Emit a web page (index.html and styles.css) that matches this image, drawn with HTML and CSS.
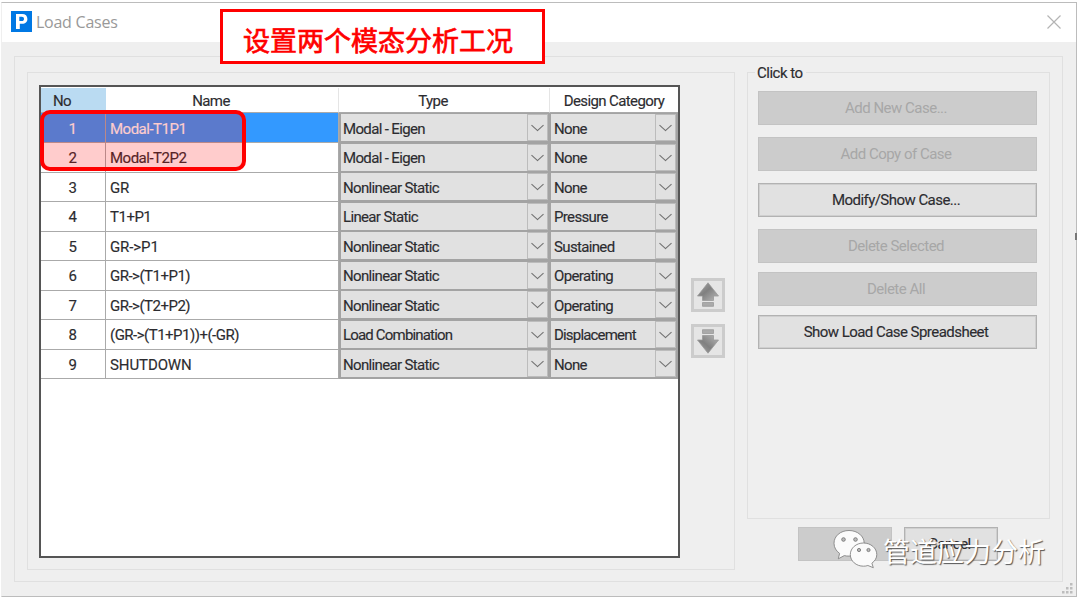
FILE: index.html
```html
<!DOCTYPE html>
<html lang="en">
<head>
<meta charset="utf-8">
<title>Load Cases</title>
<link rel="stylesheet" href="styles.css">
</head>
<body>
<div class="window">
  <header class="titlebar">
    <svg class="logo" viewBox="0 0 21 21"><rect width="21" height="21" fill="#0078e4"/><path fill="#fff" fill-rule="evenodd" d="M5 3h6.2c3.300 0 5.200 2 5.200 4.900s-2 4.900-5.200 4.900H8.800V18H5zM8.300 5.800v4.300h2.500c1.400 0 2.200-.8 2.200-2.100s-.8-2.200-2.200-2.200z"/></svg>
    <span class="title">Load Cases</span>
    <svg class="close" viewBox="0 0 14 14"><path d="M.5.5l13 13M13.500.5l-13 13" stroke="#b4b4b4" stroke-width="1.200"/></svg>
  </header>
  <main class="outer">
    <section class="cases">
      <div class="grid">
        <div class="row head"><span class="no">No</span><span class="name">Name</span><span class="type">Type</span><span class="cat">Design Category</span></div>
        <div class="row selected"><span class="no">1</span><span class="name">Modal-T1P1</span><span class="combo type">Modal - Eigen<i></i></span><span class="combo cat">None<i></i></span></div>
        <div class="row"><span class="no">2</span><span class="name">Modal-T2P2</span><span class="combo type">Modal - Eigen<i></i></span><span class="combo cat">None<i></i></span></div>
        <div class="row"><span class="no">3</span><span class="name wide">GR</span><span class="combo type">Nonlinear Static<i></i></span><span class="combo cat">None<i></i></span></div>
        <div class="row"><span class="no">4</span><span class="name">T1+P1</span><span class="combo type">Linear Static<i></i></span><span class="combo cat">Pressure<i></i></span></div>
        <div class="row"><span class="no">5</span><span class="name wide">GR-&gt;P1</span><span class="combo type">Nonlinear Static<i></i></span><span class="combo cat">Sustained<i></i></span></div>
        <div class="row"><span class="no">6</span><span class="name">GR-&gt;(T1+P1)</span><span class="combo type">Nonlinear Static<i></i></span><span class="combo cat">Operating<i></i></span></div>
        <div class="row"><span class="no">7</span><span class="name">GR-&gt;(T2+P2)</span><span class="combo type">Nonlinear Static<i></i></span><span class="combo cat">Operating<i></i></span></div>
        <div class="row"><span class="no">8</span><span class="name">(GR-&gt;(T1+P1))+(-GR)</span><span class="combo type load">Load Combination<i></i></span><span class="combo cat load">Displacement<i></i></span></div>
        <div class="row"><span class="no">9</span><span class="name wide">SHUTDOWN</span><span class="combo type">Nonlinear Static<i></i></span><span class="combo cat">None<i></i></span></div>
      </div>
      <div class="movers">
        <div class="mover"><svg viewBox="0 0 24 26"><defs><linearGradient id="g" x1="0" y1="0" x2="1" y2="1"><stop offset="0" stop-color="#a8a8a8"/><stop offset=".45" stop-color="#808080"/><stop offset="1" stop-color="#b8b8b8"/></linearGradient></defs><path d="M12 .8L22.500 14H17.500v4.500h-11V14H1.500z" fill="url(#g)" stroke="#999" stroke-width=".8"/><path d="M6.500 20.500h11v3.800h-11z" fill="#aaa" stroke="#999" stroke-width=".8"/></svg></div>
        <div class="mover down"><svg viewBox="0 0 24 26"><path d="M12 .8L22.500 14H17.500v4.500h-11V14H1.500z" fill="url(#g)" stroke="#999" stroke-width=".8"/><path d="M6.500 20.500h11v3.800h-11z" fill="#aaa" stroke="#999" stroke-width=".8"/></svg></div>
      </div>
    </section>
    <aside class="side">
      <section class="actions">
        <h2 class="legend">Click to</h2>
        <div class="btn off">Add New Case...</div>
        <div class="btn off">Add Copy of Case</div>
        <div class="btn">Modify/Show Case...</div>
        <div class="btn off tight">Delete Selected</div>
        <div class="btn off">Delete All</div>
        <div class="btn">Show Load Case Spreadsheet</div>
      </section>
      <div class="footer"><div class="btn off"></div><div class="btn cancel">Cancel</div></div>
    </aside>
  </main>
  <svg class="grip" viewBox="0 0 11 11" fill="#bdbdbd"><path d="M8 0h2.500v2.500H8zM4 4h2.500v2.500H4zM8 4h2.500v2.500H8zM0 8h2.500v2.500H0zM4 8h2.500v2.500H4zM8 8h2.500v2.500H8z"/></svg>
  <div class="edge-mark"></div>
</div>
<div class="highlight"></div>
<div class="callout">设置两个模态分析工况</div>
<div class="watermark">
  <svg class="wechat" viewBox="0 0 46 40"><g fill="#fbfbfb" stroke="#858585" stroke-width=".9"><path d="M17 1.500C8.500 1.500 2 7 2 14.300c0 4.200 2.200 7.700 5.600 10.100L6.300 29.800l6-3.200c1.500.4 3 .5 4.700.5 8.500 0 15.200-5.600 15.200-12.800S25.500 1.500 17 1.500z"/><path d="M31.500 14c-7.300 0-13.200 5.100-13.200 11.600S24.200 37.200 31.500 37.200c1.600 0 3-.2 4.400-.7l5.400 2.200-1.400-4.500c3-2.100 4.900-5.200 4.900-8.600C44.800 19.100 38.800 14 31.500 14z"/></g><g fill="#bbb" stroke="#777" stroke-width=".9"><circle cx="11.500" cy="10.500" r="1.800"/><circle cx="23.500" cy="10.500" r="1.800"/><circle cx="27" cy="21" r="1.600"/><circle cx="36.500" cy="21" r="1.600"/></g></svg>
  <span>管道应力分析</span>
</div>
</body>
</html>
```
FILE: styles.css
```css
* { box-sizing: border-box; }
body {
  margin: 0; width: 1080px; height: 600px; overflow: hidden; background: #fff;
  padding: 2px 0 0 1px; color: #2c2c30;
  font: 15px/18px Roboto, "Liberation Sans", sans-serif; letter-spacing: -.5px;
  -webkit-text-stroke: .15px;
}
.window { position: relative; width: 1076px; height: 595px; background: #efefef; border: 1px solid #bcbcbc; border-left-color: #efefef; }
.titlebar { height: 39px; background: #fff; display: flex; align-items: center; padding: 0 15px 2px 9px; }
.logo { width: 21px; height: 21px; }
.title { margin-left: 4px; flex: 1; font: 16px "Open Sans", sans-serif; letter-spacing: -.25px; color: #999; -webkit-text-stroke: 0; }
.close { width: 14px; height: 14px; }
.outer { margin: 14px 0 0 12px; width: 1049px; height: 526px; border: 1px solid #e0e0e0; padding: 15px 12px 11px; display: flex; gap: 12px; }
.cases { width: 708px; height: 498px; border: 1px solid #e0e0e0; padding: 12px 0 0 11px; display: flex; }
.grid { width: 641px; height: 473px; background: #fff; border: 2px solid #555; }
.row { display: grid; grid-template-columns: 65px 233px 211px 128px; height: 29.5px; }
.head { height: 26px; padding-top: 1px; letter-spacing: -.6px; }
.row > span { display: flex; align-items: center; border-right: 1px solid #aaa; border-bottom: 1px solid #aaa; padding-top: 2px; }
.row:not(.head) > .name { padding-left: 4px; }
.row > .no { justify-content: center; padding-right: 1px; }
.row.head > span { justify-content: center; border-right-color: #e5e5e5; padding-top: 2px; }
.row.head > .no { background: #badbf2; justify-content: flex-start; padding-left: 12px; border-right-color: #badbf2; }
.row.head > .name, .row.head > .type { padding-right: 22px; }
.row.head > .cat { letter-spacing: -.6px; border-right: 0; }
.row > .wide { letter-spacing: -.1px; }
.selected .no, .selected .name { background: #3399ff; color: #fff; }
.row > .combo { justify-content: space-between; background: #e1e1e1; border: 2px solid #a3a3a3; border-width: 1px 2px 2px 2px; padding: 2px 0 0 2px; letter-spacing: -.65px; }
.row > .load { letter-spacing: -.82px; }
.row > .cat.combo { border-left-width: 1px; padding-left: 3px; }
.combo i { width: 21px; height: 27px; margin-top: -2px; border: 1px solid #bcbcbc; display: flex; justify-content: center; align-items: center; }
.combo i::before { content: ""; width: 8px; height: 8px; border: solid #707070; border-width: 0 1.500px 1.500px 0; transform: translateY(-2px) scaleY(.9) rotate(45deg); }
.movers { padding: 193px 0 0 11px; display: flex; flex-direction: column; gap: 12px; }
.mover { width: 34px; height: 34px; border: 3px solid #ccc; background: #e5e5e5; display: flex; align-items: center; justify-content: center; }
.mover svg { width: 24px; height: 26px; }
.down svg { transform: scaleY(-1); }
.side { width: 303px; }
.actions { height: 447px; border: 1px solid #e0e0e0; padding: 0 12px 0 10px; }
.legend { margin: -9px 0 8.500px -3px; width: 51px; padding-left: 2px; background: #efefef; font: inherit; }
.btn { height: 34px; margin-bottom: 12.200px; padding-right: 3px; background: #e1e1e1; border: 1px solid #b2b2b2; box-shadow: inset 0 0 0 1px #cfcfcf; display: flex; align-items: center; justify-content: center; letter-spacing: -.54px; }
.btn.off { background: #ccc; border-color: #c3c3c3; box-shadow: none; color: #a7a7a7; -webkit-text-stroke: 0; letter-spacing: -.5px; }
.btn.tight { margin-bottom: 8.500px; }
.tight + .btn { margin-bottom: 9.500px; }
.footer { display: flex; gap: 12px; padding: 8px 0 0 51px; }
.footer .btn { width: 94px; }
.grip { position: absolute; right: 3px; bottom: 2px; width: 11px; height: 11px; }
.edge-mark { position: absolute; right: -1px; top: 230px; width: 2px; height: 7px; background: #777; }
.highlight { position: absolute; left: 40px; top: 110px; width: 206px; height: 61px; border: 4px solid #f00; border-radius: 10px; background: rgba(255, 0, 0, .2); }
.callout {
  position: absolute; left: 220px; top: 9px; width: 325px; height: 55px; border: 3px solid #f00; background: #fff; color: #f00;
  font: 400 27px/55px "Noto Sans CJK SC", sans-serif; letter-spacing: 0; padding-left: 20px; white-space: nowrap; -webkit-text-stroke: .7px;
}
.watermark {
  position: absolute; left: 832px; top: 529px; display: flex; gap: 5px; color: #fff; white-space: nowrap;
  font: 27px/44px "Noto Sans CJK SC", sans-serif; letter-spacing: 0; text-shadow: 1px 1px 1px #555; -webkit-text-stroke: 0;
}
.wechat { width: 46px; height: 40px; }
```
